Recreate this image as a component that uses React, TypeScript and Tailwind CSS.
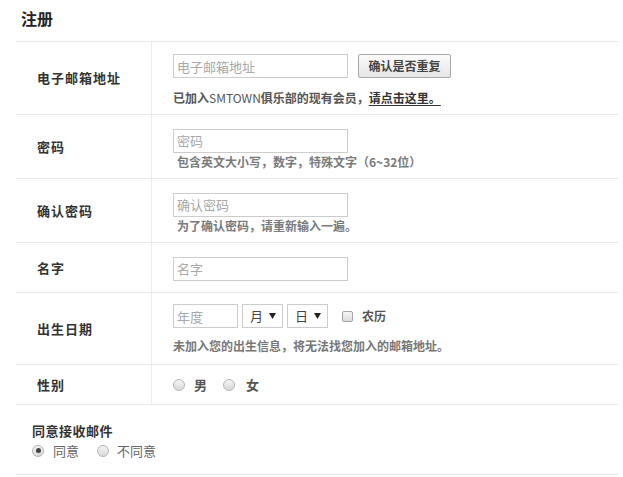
import React from 'react';

const font = "font-['Microsoft_YaHei','Noto_Sans_CJK_SC',sans-serif]";

const Radio: React.FC<{ checked?: boolean }> = ({ checked }) => (
  <span className="inline-flex h-[12px] w-[12px] items-center justify-center rounded-full border border-[#b5b5b5] bg-gradient-to-b from-[#f4f4f4] to-[#d9d9d9]">
    {checked && <span className="h-[5px] w-[5px] rounded-full bg-[#444]" />}
  </span>
);

const Row: React.FC<{
  label: string;
  height: string;
  children: React.ReactNode;
}> = ({ label, height, children }) => (
  <div className={`flex border-b border-[#e8e8e8] ${height}`}>
    <div className="flex w-[136px] shrink-0 items-center border-r border-[#ececec] pl-[21px] text-[13px] font-bold tracking-[1px] text-[#333]">
      {label}
    </div>
    <div className="flex-1 pl-[21px]">{children}</div>
  </div>
);

const TextInput: React.FC<{ placeholder: string; width?: string }> = ({
  placeholder,
  width = 'w-[175px]',
}) => (
  <input
    placeholder={placeholder}
    className={`${width} h-[24px] border border-[#cccccc] px-[3px] text-[13px] text-[#333] placeholder:text-[#a8a8a8] outline-none`}
  />
);

const Select: React.FC<{ text: string }> = ({ text }) => (
  <div className="flex h-[24px] w-[41px] items-center border border-[#cccccc] pl-[7px] text-[13px] text-[#444]">
    <span>{text}</span>
    <svg width="7" height="6" viewBox="0 0 7 6" className="ml-auto mr-[6px]">
      <path d="M0 0 H7 L3.5 6 Z" fill="#222" />
    </svg>
  </div>
);

export default function App() {
  return (
    <div className={`h-[477px] w-[623px] bg-white pl-4 pr-[5px] ${font}`}>
      {/* Header */}
      <div className="flex h-[42px] items-center border-b border-[#e8e8e8] pb-[6px] pl-[5px] text-[16px] font-bold text-[#222]">
        注册
      </div>

      {/* Email */}
      <Row label="电子邮箱地址" height="h-[73px]">
        <div className="pt-3">
          <div className="flex items-center gap-[10px]">
            <TextInput placeholder="电子邮箱地址" />
            <button className="h-[24px] w-[93px] rounded-[2px] border border-[#a9a9a9] bg-gradient-to-b from-[#fbfbfb] to-[#e6e6e6] text-[12px] font-bold text-[#444]">
              确认是否重复
            </button>
          </div>
          <p className="mt-[12px] text-[12px] leading-[16px] font-bold text-[#555]">
            已加入<span className="font-normal">SMTOWN</span>俱乐部的现有会员，
            <a className="text-[#333] underline underline-offset-2">请点击这里。</a>
          </p>
        </div>
      </Row>

      {/* Password */}
      <Row label="密码" height="h-[64px]">
        <div className="pt-3">
          <TextInput placeholder="密码" />
          <p className="mt-[1px] pl-[4px] text-[12px] leading-[16px] font-bold text-[#7a7a7a]">
            包含英文大小写，数字，特殊文字（6~32位）
          </p>
        </div>
      </Row>

      {/* Confirm */}
      <Row label="确认密码" height="h-[64px]">
        <div className="pt-3">
          <TextInput placeholder="确认密码" />
          <p className="mt-[1px] pl-[4px] text-[12px] leading-[16px] font-bold text-[#7a7a7a]">
            为了确认密码，请重新输入一遍。
          </p>
        </div>
      </Row>

      {/* Name */}
      <Row label="名字" height="h-[50px]">
        <div className="pt-3">
          <TextInput placeholder="名字" />
        </div>
      </Row>

      {/* Birthday */}
      <Row label="出生日期" height="h-[72px]">
        <div className="pt-[11px]">
          <div className="flex items-center gap-[4px]">
            <TextInput placeholder="年度" width="w-[65px]" />
            <Select text="月" />
            <Select text="日" />
            <span className="ml-[10px] inline-block h-[11px] w-[11px] rounded-[2px] border border-[#a5a5a5] bg-gradient-to-b from-[#f6f6f6] to-[#dcdcdc]" />
            <span className="ml-[5px] text-[12px] font-bold text-[#555]">农历</span>
          </div>
          <p className="mt-[10px] text-[12px] leading-[16px] font-bold text-[#777]">
            未加入您的出生信息，将无法找您加入的邮箱地址。
          </p>
        </div>
      </Row>

      {/* Gender */}
      <Row label="性别" height="h-[40px]">
        <div className="flex h-full items-center pt-[1px] text-[13px] font-bold text-[#555]">
          <Radio />
          <span className="ml-[9px]">男</span>
          <span className="ml-[16px] flex">
            <Radio />
          </span>
          <span className="ml-[11px]">女</span>
        </div>
      </Row>

      {/* Mail agreement */}
      <div className="h-[70px] border-b border-[#e8e8e8] pl-[16px] pt-[17px]">
        <div className="text-[13px] leading-[17px] font-bold tracking-[0.5px] text-[#333]">
          同意接收邮件
        </div>
        <div className="mt-[2px] flex items-center text-[13px] text-[#666]">
          <Radio checked />
          <span className="ml-[9px]">同意</span>
          <span className="ml-[18px] flex">
            <Radio />
          </span>
          <span className="ml-[8px]">不同意</span>
        </div>
      </div>
    </div>
  );
}
